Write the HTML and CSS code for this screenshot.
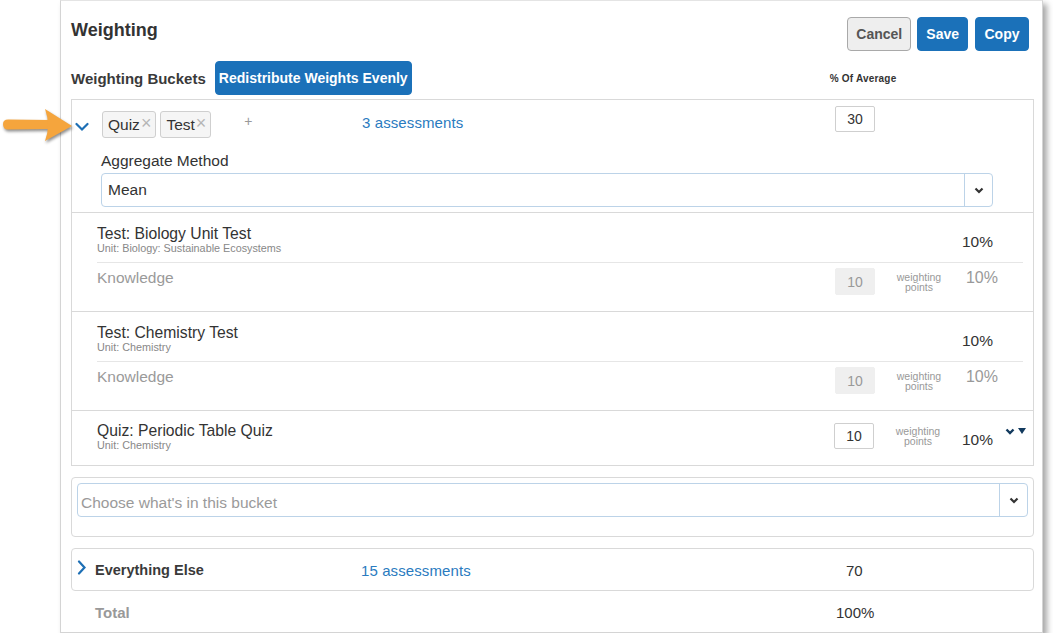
FILE: index.html
```html
<!DOCTYPE html>
<html lang="en">
<head>
<meta charset="UTF-8">
<title>Weighting</title>
<link rel="stylesheet" href="styles.css">
</head>
<body>

<svg class="pointer" width="80" height="40" viewBox="0 0 80 40">
    <path d="M3 20 Q3 15.5 8 15.5 L50 16 L50 25 L8 25.5 Q3 25.5 3 20 Z" fill="#f5a53d"/>
    <path d="M45 5 L72 22 L45 37 Q51 21 45 5 Z" fill="#f5a53d"/>
</svg>

<div class="panel">
    <div class="panel-top">
        <h2>Weighting</h2>
        <div class="actions">
            <button class="btn btn-default">Cancel</button>
            <button class="btn btn-primary">Save</button>
            <button class="btn btn-primary">Copy</button>
        </div>
    </div>

    <div class="buckets-bar">
        <h3>Weighting Buckets</h3>
        <button class="btn btn-primary">Redistribute Weights Evenly</button>
        <span class="avg-label">% Of Average</span>
    </div>

    <div class="bucket">
        <div class="bucket-head">
            <svg class="toggle-down" width="14" height="10" viewBox="0 0 14 10">
                <polyline points="1.5,2 7,7.5 12.5,2" fill="none" stroke="#1d6fb5" stroke-width="2.2" stroke-linecap="round"/>
            </svg>
            <div class="tags">
                <span class="tag">Quiz<span class="x">×</span></span>
                <span class="tag">Test<span class="x">×</span></span>
                <span class="plus">+</span>
            </div>
            <a href="#" class="count">3 assessments</a>
            <input class="num" type="text" value="30">
        </div>

        <div class="aggregate">
            <label>Aggregate Method</label>
            <div class="select">
                <span class="select-value">Mean</span>
                <span class="select-arrow">
                    <svg width="10" height="7" viewBox="0 0 10 7"><polyline points="1.5,1.5 5,5 8.5,1.5" fill="none" stroke="#333" stroke-width="2.2"/></svg>
                </span>
            </div>
        </div>

        <div class="item">
            <div class="item-head">
                <div class="item-title">
                    <div class="name">Test: Biology Unit Test</div>
                    <div class="unit">Unit: Biology: Sustainable Ecosystems</div>
                </div>
                <span class="pct">10%</span>
            </div>
            <div class="skill">
                <span class="skill-name">Knowledge</span>
                <span class="num num-off">10</span>
                <span class="wp">weighting<br>points</span>
                <span class="pct-light">10%</span>
            </div>
        </div>

        <div class="item">
            <div class="item-head">
                <div class="item-title">
                    <div class="name">Test: Chemistry Test</div>
                    <div class="unit">Unit: Chemistry</div>
                </div>
                <span class="pct">10%</span>
            </div>
            <div class="skill">
                <span class="skill-name">Knowledge</span>
                <span class="num num-off">10</span>
                <span class="wp">weighting<br>points</span>
                <span class="pct-light">10%</span>
            </div>
        </div>

        <div class="item">
            <div class="item-head item-head-tall">
                <div class="item-title">
                    <div class="name">Quiz: Periodic Table Quiz</div>
                    <div class="unit">Unit: Chemistry</div>
                </div>
                <input class="num" type="text" value="10">
                <span class="wp">weighting<br>points</span>
                <span class="pct pct-low">10%</span>
                <span class="row-menu">
                    <svg width="10" height="7" viewBox="0 0 10 7"><polyline points="1.5,1.5 5,5 8.5,1.5" fill="none" stroke="#123a5e" stroke-width="2.4"/></svg>
                    <svg width="8" height="6" viewBox="0 0 8 6"><polygon points="0,0 8,0 4,6" fill="#123a5e"/></svg>
                </span>
            </div>
        </div>
    </div>

    <div class="chooser">
        <div class="select select-choose">
            <span class="select-value placeholder">Choose what's in this bucket</span>
            <span class="select-arrow">
                <svg width="10" height="7" viewBox="0 0 10 7"><polyline points="1.5,1.5 5,5 8.5,1.5" fill="none" stroke="#333" stroke-width="2.2"/></svg>
            </span>
        </div>
    </div>

    <div class="else-box">
        <svg class="toggle-right" width="9" height="15" viewBox="0 0 9 15">
            <polyline points="2,1.5 7.5,7.5 2,13.5" fill="none" stroke="#1d6fb5" stroke-width="2.2" stroke-linecap="round"/>
        </svg>
        <span class="else-name">Everything Else</span>
        <a href="#" class="count">15 assessments</a>
        <span class="else-val">70</span>
    </div>

    <div class="total-row">
        <span class="total-name">Total</span>
        <span class="total-val">100%</span>
    </div>
</div>

</body>
</html>
```

FILE: styles.css
```css
body {
    margin: 0;
    background: #ffffff;
    font-family: "Liberation Sans", Arial, sans-serif;
    color: #333;
}
.pointer {
    position: absolute;
    left: 0;
    top: 104px;
    filter: drop-shadow(1px 2px 1.5px rgba(0,0,0,0.45));
    z-index: 2;
}
.panel {
    margin-left: 60px;
    width: 983px;
    height: 633px;
    box-sizing: border-box;
    border: 1px solid #d4d4d4;
    border-top-color: #e4e4e4;
    box-shadow: 4px 4px 6px rgba(0,0,0,0.35);
    padding: 16px 8px 0 10px;
    background: #fff;
}
.panel-top {
    display: flex;
    justify-content: space-between;
    align-items: flex-start;
}
.panel-top h2 {
    margin: 2px 0 0;
    font-size: 18px;
    line-height: 22px;
    font-weight: bold;
    color: #333;
}
.actions {
    display: flex;
    gap: 6px;
    margin-right: 5px;
}
.btn {
    height: 34px;
    padding: 0 8px;
    border-radius: 4px;
    font-family: inherit;
    font-size: 14px;
    font-weight: bold;
    cursor: pointer;
}
.btn-default {
    background: #eeeeee;
    border: 1px solid #a9a9a9;
    color: #555;
    width: 64px;
    margin-left: 1px;
}
.btn-primary {
    background: #1b71b9;
    border: 1px solid #1b71b9;
    color: #fff;
}
.actions .btn-primary:last-child {
    margin-left: 1px;
    width: 54px;
}
.buckets-bar {
    display: flex;
    align-items: center;
    margin-top: 10px;
}
.buckets-bar h3 {
    margin: 0 9px 0 0;
    font-size: 15px;
    font-weight: bold;
    color: #3a3a3a;
}
.buckets-bar .btn {
    width: 197px;
    padding: 0;
}
.avg-label {
    margin-left: 418px;
    font-size: 10px;
    font-weight: bold;
    letter-spacing: 0.2px;
    color: #333;
}
.bucket {
    margin-top: 4px;
    border: 1px solid #d9d9d9;
}
.bucket-head {
    display: flex;
    align-items: flex-start;
    height: 45px;
    box-sizing: border-box;
    padding: 6px 0 0 3px;
}
.toggle-down {
    margin: 16px 13px 0 0;
}
.tags {
    display: flex;
    gap: 4px;
    width: 260px;
    margin-top: 5px;
}
.tag {
    display: inline-flex;
    align-items: center;
    height: 27px;
    box-sizing: border-box;
    padding: 0 4px 0 5px;
    border: 1px solid #cfcfcf;
    border-radius: 3px;
    background: #f5f5f5;
    font-size: 15.5px;
    color: #333;
}
.tag .x {
    margin-left: 1px;
    color: #b5b5b5;
    font-size: 18px;
    line-height: 18px;
    margin-top: -4px;
}
.plus {
    margin: 2px 0 0 29px;
    color: #999;
    font-size: 14px;
}
.count {
    color: #2a7bc0;
    text-decoration: none;
    font-size: 15px;
    letter-spacing: 0.1px;
}
.bucket-head .count {
    width: 473px;
    margin-top: 8px;
}
.num {
    width: 40px;
    height: 26px;
    box-sizing: border-box;
    border: 1px solid #cfcfcf;
    border-radius: 2px;
    font-family: inherit;
    font-size: 14px;
    color: #333;
    text-align: center;
    padding: 0;
}
.num-off {
    display: inline-flex;
    align-items: center;
    justify-content: center;
    height: 27px;
    background: #efefef;
    border-color: #efefef;
    color: #999;
}
.aggregate {
    padding: 7px 0 5px 29px;
}
.aggregate label {
    display: block;
    font-size: 15.5px;
    line-height: 18px;
    margin-bottom: 3px;
}
.select {
    display: flex;
    align-items: stretch;
    width: 892px;
    height: 34px;
    box-sizing: border-box;
    border: 1px solid #bcd3e8;
    border-radius: 4px;
    background: #fff;
}
.select-value {
    flex: 1;
    display: flex;
    align-items: center;
    padding-left: 6px;
    font-size: 15.5px;
}
.placeholder {
    color: #9a9a9a;
    padding: 5px 0 0 3px;
}
.select-arrow {
    width: 27px;
    display: flex;
    align-items: center;
    justify-content: center;
    border-left: 1px solid #bcd3e8;
}
.item {
    border-top: 1px solid #d9d9d9;
    padding: 0 10px 0 25px;
}
.item-head {
    display: flex;
    align-items: center;
    height: 49px;
    box-sizing: border-box;
    padding-top: 4px;
}
.item-head-tall {
    height: 54px;
    padding: 0 0 4px;
}
.item-title {
    flex: 1;
}
.name {
    font-size: 15.7px;
    line-height: 17px;
    color: #333;
}
.unit {
    font-size: 10.8px;
    line-height: 12px;
    color: #888;
}
.pct {
    font-size: 15.5px;
    margin-right: 30px;
    margin-top: 4px;
}
.skill {
    display: flex;
    align-items: flex-start;
    height: 49px;
    box-sizing: border-box;
    padding-top: 5px;
    border-top: 1px solid #e6e6e6;
}
.skill-name {
    flex: 1;
    color: #9a9a9a;
    font-size: 15.5px;
    line-height: 18px;
    margin-top: 1px;
}
.wp {
    font-size: 10.5px;
    line-height: 10px;
    color: #999;
    text-align: center;
    width: 46px;
    margin: 0 24px 0 21px;
}
.skill .wp {
    margin-top: 4px;
}
.pct-light {
    font-size: 16px;
    line-height: 18px;
    color: #999;
    margin: 1px 25px 0 0;
}
.item-head-tall .num {
    margin-left: 6px;
}
.item-head-tall .wp {
    margin: 0 21px 0 21px;
}
.pct-low {
    margin: 8px 0 0 0;
}
.row-menu {
    display: flex;
    gap: 3px;
    align-items: flex-start;
    align-self: flex-start;
    margin: 17px -3px 0 12px;
}
.chooser {
    margin-top: 11px;
    border: 1px solid #d9d9d9;
    border-radius: 4px;
    padding: 5px 5px 19px 5px;
}
.select-choose {
    width: 100%;
}
.else-box {
    display: flex;
    align-items: center;
    margin-top: 11px;
    height: 43px;
    box-sizing: border-box;
    border: 1px solid #d9d9d9;
    border-radius: 4px;
    padding-left: 5px;
}
.toggle-right {
    margin: -5px 9px 0 0;
}
.else-name {
    width: 266px;
    font-size: 14.5px;
    font-weight: bold;
    color: #3a3a3a;
    margin-top: 1px;
}
.else-box .count {
    width: 485px;
    margin-top: 1px;
}
.else-val {
    font-size: 15px;
    margin-top: 1px;
}
.total-row {
    display: flex;
    align-items: center;
    height: 42px;
    padding-left: 24px;
}
.total-name {
    width: 741px;
    font-size: 15px;
    font-weight: bold;
    color: #999;
}
.total-val {
    font-size: 15px;
}
```
